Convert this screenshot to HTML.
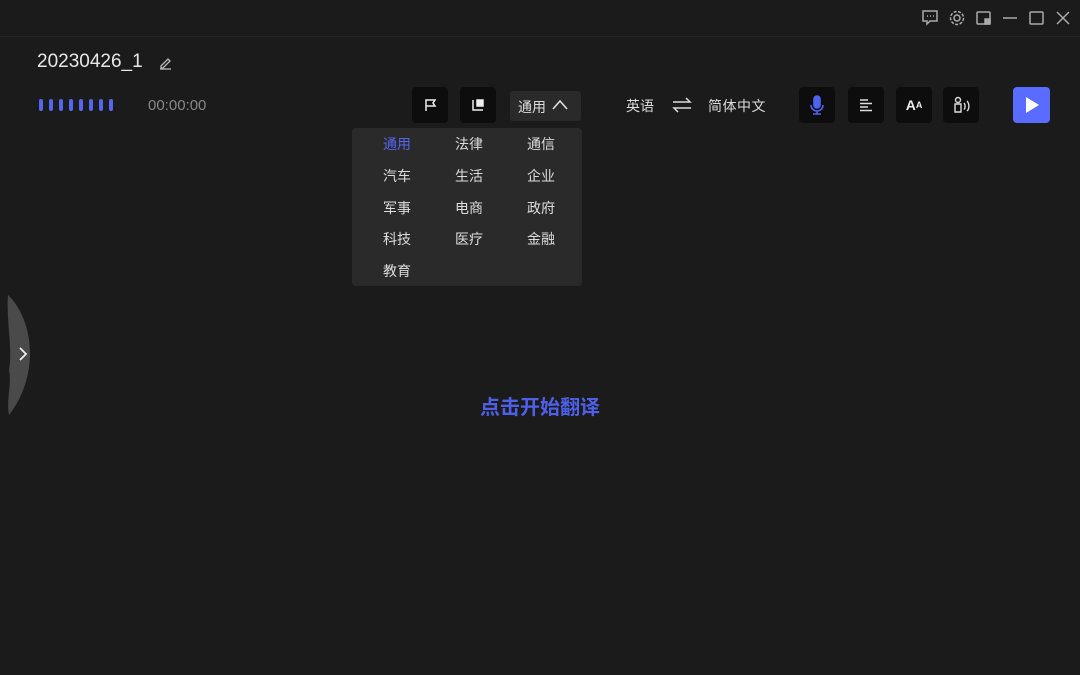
<!DOCTYPE html>
<html><head><meta charset="utf-8"><style>
*{margin:0;padding:0;box-sizing:border-box}
body{width:1080px;height:675px;background:#1b1b1b;position:relative;overflow:hidden;font-family:"Liberation Sans","Noto Sans CJK SC",sans-serif;color:#ddd}
.a{position:absolute}
.btn{position:absolute;top:87px;width:36px;height:36px;background:#0d0d0d;border-radius:4px;display:flex;align-items:center;justify-content:center}
.dd span{position:absolute;width:60px;text-align:center;font-size:14px;color:#ddd;line-height:16px}
</style></head><body>
<div class="a" style="left:0;top:36px;width:1080px;height:1px;background:#242424"></div>
<svg class="a" style="left:920px;top:8px" width="160" height="20" viewBox="0 0 160 20" fill="none" stroke="#aaa" stroke-width="1.5">
<path d="M3 3h14v10h-7l-3 3v-3H3z"/><path d="M7 8h1M10 8h1M13 8h1"/>
<circle cx="37" cy="10" r="3"/><circle cx="37" cy="10" r="6.5" stroke-dasharray="3 1.5"/>
<rect x="57" y="4" width="13" height="12" rx="1"/><rect x="65" y="11" width="5" height="5" fill="#aaa"/>
<path d="M83 10h14"/>
<rect x="110" y="4" width="13" height="12" rx="1"/>
<path d="M137 4l12 12M149 4l-12 12"/>
</svg>
<div class="a" style="left:37px;top:51px;font-size:19px;color:#e8e8e8">20230426_1</div>
<svg class="a" style="left:157px;top:55px" width="16" height="16" viewBox="0 0 16 16" fill="none" stroke="#bbb" stroke-width="1.3"><path d="M4 11l7-7 2 2-7 7H4z"/><path d="M3 14h11"/></svg>
<div class="a" style="left:39px;top:99px;display:flex;gap:6px">
<i style="width:4px;height:12px;background:#5566ee;border-radius:2px"></i><i style="width:4px;height:12px;background:#5566ee;border-radius:2px"></i><i style="width:4px;height:12px;background:#5566ee;border-radius:2px"></i><i style="width:4px;height:12px;background:#5566ee;border-radius:2px"></i><i style="width:4px;height:12px;background:#5566ee;border-radius:2px"></i><i style="width:4px;height:12px;background:#5566ee;border-radius:2px"></i><i style="width:4px;height:12px;background:#5566ee;border-radius:2px"></i><i style="width:4px;height:12px;background:#5566ee;border-radius:2px"></i>
</div>
<div class="a" style="left:148px;top:97px;font-size:15px;color:#888">00:00:00</div>
<div class="btn" style="left:412px"><svg width="16" height="16" fill="none" stroke="#eee" stroke-width="1.5"><path d="M4 14V3h9l-2 3 2 3H4"/></svg></div>
<div class="btn" style="left:460px"><svg width="16" height="16" fill="none" stroke="#eee" stroke-width="1.5"><path d="M3 3v10h10"/><rect x="7" y="3" width="6" height="6" fill="#eee"/></svg></div>
<div class="a" style="left:510px;top:91px;width:71px;height:30px;background:#2a2a2a;border-radius:3px;font-size:14px;color:#ddd;padding:6px 0 0 8px">通用<svg style="position:absolute;left:41px;top:7px" width="18" height="14" fill="none" stroke="#ddd" stroke-width="1.6"><path d="M2 11l7-8 7 8"/></svg></div>
<div class="a" style="left:626px;top:96px;font-size:14px">英语</div>
<svg class="a" style="left:671px;top:95px" width="22" height="20" fill="none" stroke="#ddd" stroke-width="1.5"><path d="M2 7h17l-4-4M20 13H3l4 4"/></svg>
<div class="a" style="left:708px;top:96px;font-size:14px;letter-spacing:0.5px">简体中文</div>
<div class="btn" style="left:799px"><svg width="16" height="20" fill="none" stroke="#4f63f0" stroke-width="1.6"><rect x="5" y="1" width="6" height="12" rx="3" fill="#4f63f0"/><path d="M2 10a6 6 0 0 0 12 0M8 16v3M4 19h8"/></svg></div>
<div class="btn" style="left:848px"><svg width="16" height="16" fill="none" stroke="#ddd" stroke-width="1.5"><path d="M2 3h8M2 6.5h12M2 10h8M2 13.5h12"/></svg></div>
<div class="btn" style="left:896px;font-size:14px;color:#eee;font-weight:bold">A<span style="font-size:9px;vertical-align:top">A</span></div>
<div class="btn" style="left:943px"><svg width="18" height="18" fill="none" stroke="#ddd" stroke-width="1.4"><circle cx="6" cy="4" r="2.5"/><path d="M3 8h6v8H3zM12 7c1.5 1.5 1.5 5 0 6.5M15 5c2.5 2.5 2.5 8 0 10"/></svg></div>
<div class="a" style="left:1013px;top:87px;width:37px;height:36px;background:#5a6bff;border-radius:4px"><svg style="position:absolute;left:11px;top:9px" width="16" height="18"><path d="M2 1l13 8-13 8z" fill="#fff"/></svg></div>
<div class="a dd" style="left:352px;top:128px;width:230px;height:158px;background:#2a2a2a;border-radius:4px">
<span style="left:15px;top:8px;color:#5566ee">通用</span><span style="left:87px;top:8px">法律</span><span style="left:159px;top:8px">通信</span>
<span style="left:15px;top:40px">汽车</span><span style="left:87px;top:40px">生活</span><span style="left:159px;top:40px">企业</span>
<span style="left:15px;top:72px">军事</span><span style="left:87px;top:72px">电商</span><span style="left:159px;top:72px">政府</span>
<span style="left:15px;top:103px">科技</span><span style="left:87px;top:103px">医疗</span><span style="left:159px;top:103px">金融</span>
<span style="left:15px;top:135px">教育</span>
</div>
<svg class="a" style="left:0;top:290px" width="40" height="130"><path d="M8 5C34 30 40 85 9 125C6 110 12 95 9 80C13 60 6 30 8 5z" fill="#4a4a4a"/><path d="M20 58l6 6-6 6" fill="none" stroke="#eee" stroke-width="1.8"/></svg>
<div class="a" style="left:0;top:391px;width:1080px;text-align:center;font-size:20px;color:#4f60e8;font-weight:bold">点击开始翻译</div>
</body></html>
